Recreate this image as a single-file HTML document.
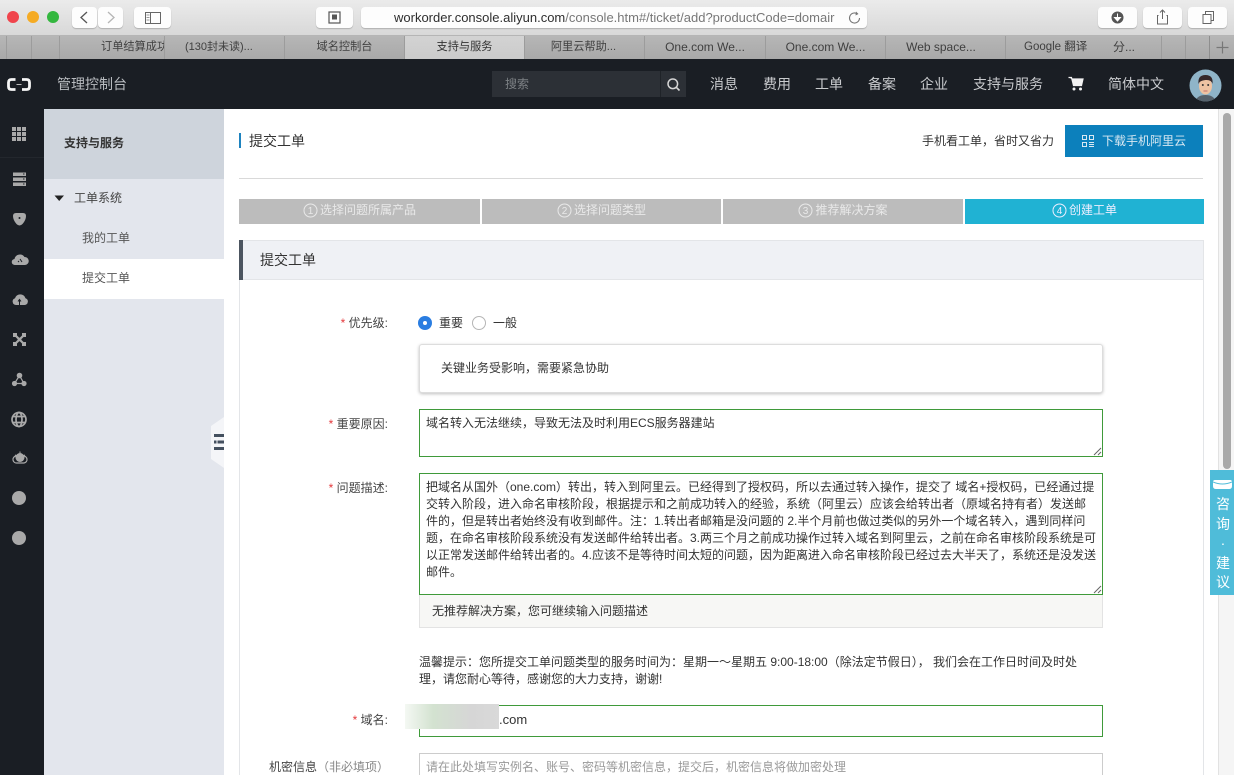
<!DOCTYPE html>
<html lang="zh"><head><meta charset="utf-8"><title>提交工单</title>
<style>
*{box-sizing:border-box}
html,body{margin:0;padding:0;width:1234px;height:775px;overflow:hidden}
body{background:#fff;font-family:"Liberation Sans","Noto Sans CJK SC",sans-serif;font-size:12px;color:#333}
#w{position:relative;width:1234px;height:775px;overflow:hidden}
.a{position:absolute;white-space:nowrap}
.btn{position:absolute;background:#fdfdfd;border-radius:4px;box-shadow:0 1px 1px rgba(0,0,0,.2);height:21px;top:7px}
.tab{position:absolute;top:36px;height:23px;line-height:23px;text-align:center;color:#3f3f3f;font-size:12px;border-left:1px solid #9c9c9c;white-space:nowrap;overflow:hidden}
.nav{position:absolute;top:75px;font-size:14px;line-height:18px;color:#c9cbce;white-space:nowrap}
.step{position:absolute;top:199px;height:25px;background:#bcbcbc;color:#e9e9e9;text-align:center;line-height:23px;font-size:12px;white-space:nowrap}
.step svg{vertical-align:-4px;margin-right:2px}
.lab{position:absolute;right:846px;font-size:12px;line-height:18px;color:#444;white-space:nowrap}
.lab i{color:#e4393c;font-style:normal}
.box{position:absolute;left:419px;width:684px;border:1.5px solid #3f9a3a;background:#fff}
.ln{position:absolute;left:426px;font-size:12px;line-height:17px;color:#333;white-space:nowrap}
</style></head><body><div id="w">

<!-- browser toolbar -->
<div class="a" style="left:0;top:0;width:1234px;height:36px;background:linear-gradient(#ebebeb,#d8d8d8);border-bottom:1px solid #b5b5b5"></div>
<div class="a" style="left:7px;top:11px;width:12px;height:12px;border-radius:50%;background:#f0444c"></div>
<div class="a" style="left:27px;top:11px;width:12px;height:12px;border-radius:50%;background:#f5ab24"></div>
<div class="a" style="left:47px;top:11px;width:12px;height:12px;border-radius:50%;background:#34b73f"></div>
<div class="btn" style="left:72px;width:25px"><svg width="25" height="21"><path d="M15 5L9 10.500L15 16" fill="none" stroke="#555" stroke-width="1.300"/></svg></div>
<div class="btn" style="left:98px;width:25px"><svg width="25" height="21"><path d="M10 5L16 10.500L10 16" fill="none" stroke="#b5b5b5" stroke-width="1.300"/></svg></div>
<div class="btn" style="left:134px;width:37px"><svg width="37" height="21"><rect x="11.500" y="5.500" width="15" height="11" fill="none" stroke="#666"/><path d="M16.500 5.500V16.500" stroke="#666"/><path d="M12.500 8h3M12.500 10.500h3M12.500 13h3" stroke="#999"/></svg></div>
<div class="btn" style="left:316px;width:37px"><svg width="37" height="21"><rect x="13" y="5" width="11" height="11" fill="none" stroke="#555" stroke-width="1.200"/><rect x="16" y="7.500" width="5" height="5" fill="#555"/></svg></div>
<div class="btn" style="left:361px;width:506px;font-size:13px;line-height:21px;color:#777;overflow:hidden"><span style="position:absolute;left:33px;top:0;white-space:nowrap"><span style="color:#2e2e2e">workorder.console.aliyun.com</span>/console.htm#/ticket/add?productCode=domair</span>
<svg style="position:absolute;left:486px;top:3px" width="16" height="16"><path d="M12.500 8a5 5 0 1 1-2-4" fill="none" stroke="#777" stroke-width="1.100"/><path d="M9 1.500L11.500 4L8.500 5.500z" fill="#777"/></svg></div>
<div class="btn" style="left:1098px;width:39px"><svg width="39" height="21"><circle cx="19.500" cy="10.500" r="6" fill="#555"/><path d="M19.500 6.500v5M16.500 10.500l3 3.500 3-3.500z" stroke="#fff" fill="#fff"/></svg></div>
<div class="btn" style="left:1143px;width:39px"><svg width="39" height="21"><path d="M15.500 8.500h-1v8.500h10v-8.500h-1M19.500 12V3.500M17 5.500l2.500-2.500 2.500 2.500" fill="none" stroke="#666"/></svg></div>
<div class="btn" style="left:1188px;width:39px"><svg width="39" height="21"><rect x="15" y="7.500" width="8" height="9" fill="none" stroke="#666"/><path d="M17.500 7.500V4.500h8v9h-2.500" fill="none" stroke="#666"/></svg></div>

<!-- tabs -->
<div class="a" style="left:0;top:36px;width:1234px;height:23px;background:linear-gradient(#b6b6b6,#a9a9a9)"></div>
<div class="tab" style="left:6px;width:25px"></div>
<div class="tab" style="left:31px;width:28px"></div>
<div class="tab" style="left:59px;width:105px;padding-left:41px;text-align:left;font-size:11.200px">订单结算成功</div>
<div class="tab" style="left:164px;width:120px;text-align:left;padding-left:20px;font-size:11px">(130封未读)...</div>
<div class="tab" style="left:284px;width:120px;font-size:11.200px">域名控制台</div>
<div class="tab" style="left:404px;width:120px;background:linear-gradient(#d3d3d3,#cbcbcb);color:#333;font-size:11.200px">支持与服务</div>
<div class="tab" style="left:524px;width:120px;padding-right:2px;font-size:11.200px">阿里云帮助...</div>
<div class="tab" style="left:644px;width:121px">One.com We...</div>
<div class="tab" style="left:765px;width:120px">One.com We...</div>
<div class="tab" style="left:885px;width:120px;padding-right:9px">Web space...</div>
<div class="tab" style="left:1005px;width:120px;text-align:left;padding-left:18px;font-size:11.500px">Google 翻译</div>
<div class="tab" style="left:1093px;width:69px;border:0;border-right:1px solid #9c9c9c;text-align:left;padding-left:20px">分...</div>
<div class="tab" style="left:1162px;width:24px;border-right:1px solid #9c9c9c;border-left:0"></div>
<div class="tab" style="left:1186px;width:24px;border-right:1px solid #8e8e8e;border-left:0"></div>
<svg class="a" style="left:1215px;top:40px" width="15" height="15"><path d="M7.500 1.500v12M1.500 7.500h12" stroke="#777" stroke-width="1.200"/></svg>

<!-- top nav -->
<div class="a" style="left:0;top:59px;width:1234px;height:50px;background:#1a1e24"></div>
<svg class="a" style="left:7px;top:78px" width="24" height="13"><path d="M8.500 1.500H4.500Q1.500 1.500 1.500 4.500V8.500Q1.500 11.500 4.500 11.500H8.500M15 1.500H19.500Q22.500 1.500 22.500 4.500V8.500Q22.500 11.500 19.500 11.500H15" fill="none" stroke="#f6f6f6" stroke-width="2.800"/><path d="M9.500 6.500h5" stroke="#bbb" stroke-width="1"/></svg>
<div class="a" style="left:57px;top:75px;font-size:14px;line-height:18px;color:#b9bcc0">管理控制台</div>
<div class="a" style="left:492px;top:71px;width:194px;height:26px;background:#2c3036"></div>
<div class="a" style="left:660px;top:71px;width:1px;height:26px;background:#1f2328"></div>
<div class="a" style="left:505px;top:76px;font-size:12px;line-height:16px;color:#7d8185">搜索</div>
<svg class="a" style="left:666px;top:77px" width="15" height="15"><circle cx="6.800" cy="6.800" r="4.800" fill="none" stroke="#d6d6d6" stroke-width="1.500"/><path d="M10.300 10.300L13.500 13.500" stroke="#d6d6d6" stroke-width="1.600"/></svg>
<div class="nav" style="left:710px">消息</div>
<div class="nav" style="left:763px">费用</div>
<div class="nav" style="left:815px">工单</div>
<div class="nav" style="left:868px">备案</div>
<div class="nav" style="left:920px">企业</div>
<div class="nav" style="left:973px">支持与服务</div>
<svg class="a" style="left:1067px;top:76px" width="18" height="16"><path d="M1.500 1.500H4.500L6.500 9.500H14.500L16 3H5" fill="#f2f2f2" stroke="#f2f2f2" stroke-width="1.200"/><circle cx="7" cy="13" r="1.500" fill="#f2f2f2"/><circle cx="13.500" cy="13" r="1.500" fill="#f2f2f2"/></svg>
<div class="nav" style="left:1108px">简体中文</div>
<svg class="a" style="left:1189px;top:69px" width="33" height="33"><defs><clipPath id="c"><circle cx="16.500" cy="16.500" r="16"/></clipPath></defs><g clip-path="url(#c)"><rect width="33" height="33" fill="#8fb4c8"/><path d="M6 33Q8 26 16.500 26T27 33z" fill="#56626c"/><ellipse cx="16.500" cy="17" rx="6.500" ry="8.500" fill="#eec3a2"/><path d="M9.500 15Q8.500 6 16.500 6T23.500 15Q22.500 10.500 16.500 11T9.500 15z" fill="#35282a"/><circle cx="13.800" cy="16" r="1" fill="#333"/><circle cx="19.200" cy="16" r="1" fill="#333"/><path d="M14.500 22h4" stroke="#b55" stroke-width=".8"/></g></svg>

<!-- left rail -->
<div class="a" style="left:0;top:109px;width:44px;height:666px;background:#1a1e24"></div>
<div class="a" style="left:0;top:157px;width:44px;height:1px;background:#23272d"></div>
<svg class="a" style="left:0;top:109px" width="44" height="400" viewBox="0 109 44 400" fill="#a9a9a9">
<path d="M12 127h4v4h-4zM17 127h4v4h-4zM22 127h4v4h-4zM12 132h4v4h-4zM17 132h4v4h-4zM22 132h4v4h-4zM12 137h4v4h-4zM17 137h4v4h-4zM22 137h4v4h-4z"/>
<path d="M13 172.500h13v3.500H13zM13 177.500h13v3.500H13zM13 182.500h13v3.500H13z"/>
<path d="M23 174h1.500M23 179h1.500M23 184h1.500" stroke="#1a1e24"/>
<path d="M13 216Q13 213 16 213H23Q26 213 26 216Q26 220 22.500 224Q19.500 227 16.500 224Q13 220 13 216z"/><circle cx="19.500" cy="218" r="1" fill="#1a1e24"/>
<path d="M15 265a3 3 0 0 1-.5-6 5.500 5.500 0 0 1 10-2 4 4 0 0 1 .5 8z"/><path d="M20 259l2 3M18 262l1-1" stroke="#1a1e24"/>
<path d="M16 305a3.500 3.500 0 0 1-1-6.800 5.500 5.500 0 0 1 10.500 0 3.500 3.500 0 0 1-1 6.800z"/><path d="M19.500 305v-5M18 301.500l1.500-2 1.500 2" stroke="#1a1e24" fill="none"/>
<path d="M14.500 334.500l10 10M24.500 334.500l-10 10" stroke="#a9a9a9" stroke-width="2.200"/><path d="M13 333h4v4h-4zM22 333h4v4h-4zM13 342h4v4h-4zM22 342h4v4h-4z"/><circle cx="19.500" cy="339.500" r="1.800"/>
<circle cx="19.500" cy="375.500" r="2.800"/><circle cx="14.500" cy="383.500" r="2.600"/><circle cx="24" cy="383.500" r="2.600"/><path d="M19.500 375.500L14.500 383.500H24z" fill="none" stroke="#a9a9a9" stroke-width="1.200"/>
<g fill="none" stroke="#a9a9a9" stroke-width="1.700"><circle cx="19" cy="419.500" r="7"/><ellipse cx="19" cy="419.500" rx="3" ry="7"/><path d="M12.500 416.500h13M12.500 422.500h13"/></g>
<path d="M17 463a3.500 3.500 0 0 1-1-7l7 0a3.500 3.500 0 0 1 1 7z" fill="none" stroke="#a9a9a9" stroke-width="1.200"/><circle cx="20" cy="457.500" r="4.500"/><path d="M20 451.500v2M15 455l2 1M25 455l-2 1" stroke="#a9a9a9"/>
</svg>
<div class="a" style="left:12px;top:491px;width:14px;height:14px;border-radius:50%;background:#a9a9a9"></div>
<div class="a" style="left:12px;top:531px;width:14px;height:14px;border-radius:50%;background:#a9a9a9"></div>

<!-- sidebar -->
<div class="a" style="left:44px;top:109px;width:180px;height:666px;background:#e3e6ed"></div>
<div class="a" style="left:44px;top:109px;width:180px;height:70px;background:#ced4dc"></div>
<div class="a" style="left:64px;top:135px;font-size:12px;line-height:17px;font-weight:700;color:#333">支持与服务</div>
<svg class="a" style="left:54px;top:195px" width="11" height="7"><path d="M0.500 0.500H10L5.200 6z" fill="#222"/></svg>
<div class="a" style="left:74px;top:190px;line-height:17px;color:#444">工单系统</div>
<div class="a" style="left:82px;top:230px;line-height:17px;color:#555">我的工单</div>
<div class="a" style="left:44px;top:259px;width:180px;height:40px;background:#fff"></div>
<div class="a" style="left:82px;top:270px;line-height:17px;color:#555">提交工单</div>
<svg class="a" style="left:210px;top:417px" width="14" height="51"><path d="M14 0L1 9V42L14 51z" fill="#f4f5f8"/><path d="M4 17h10v3H4zM4 23.500h2.500v3H4zM7.500 23.500H14v3H7.500zM4 30h10v3H4z" fill="#44505f"/></svg>

<!-- page head -->
<div class="a" style="left:239px;top:133px;width:2px;height:15px;background:#1e83bf"></div>
<div class="a" style="left:249px;top:131px;font-size:14px;line-height:20px;color:#333">提交工单</div>
<div class="a" style="left:922px;top:133px;line-height:17px;color:#333">手机看工单，省时又省力</div>
<div class="a" style="left:1065px;top:125px;width:138px;height:32px;background:#0c80bc;color:#d8e8f2;line-height:32px;padding-left:37px">下载手机阿里云</div>
<svg class="a" style="left:1081px;top:134px" width="14" height="14" fill="none" stroke="#d8e8f2"><rect x="1.500" y="1.500" width="4" height="4"/><rect x="8.500" y="1.500" width="4" height="4"/><rect x="1.500" y="8.500" width="4" height="4"/><path d="M8 8.500h5M8 10.500h5M8 12.500h5"/></svg>
<div class="a" style="left:239px;top:178px;width:964px;height:1px;background:#d9d9d9"></div>

<!-- steps -->
<div class="step" style="left:239px;width:241px"><svg width="15" height="15"><circle cx="7.500" cy="7.500" r="6.500" fill="none" stroke="#e9e9e9"/><text x="7.500" y="11" font-size="10" text-anchor="middle" fill="#e9e9e9">1</text></svg>选择问题所属产品</div>
<div class="step" style="left:482px;width:239px"><svg width="15" height="15"><circle cx="7.500" cy="7.500" r="6.500" fill="none" stroke="#e9e9e9"/><text x="7.500" y="11" font-size="10" text-anchor="middle" fill="#e9e9e9">2</text></svg>选择问题类型</div>
<div class="step" style="left:723px;width:240px"><svg width="15" height="15"><circle cx="7.500" cy="7.500" r="6.500" fill="none" stroke="#e9e9e9"/><text x="7.500" y="11" font-size="10" text-anchor="middle" fill="#e9e9e9">3</text></svg>推荐解决方案</div>
<div class="step" style="left:965px;width:239px;background:#20b2d3;color:#eef"><svg width="15" height="15"><circle cx="7.500" cy="7.500" r="6.500" fill="none" stroke="#eef"/><text x="7.500" y="11" font-size="10" text-anchor="middle" fill="#eef">4</text></svg>创建工单</div>

<!-- panel -->
<div class="a" style="left:239px;top:240px;width:965px;height:535px;border:1px solid #e3e5e8;border-bottom:0"></div>
<div class="a" style="left:239px;top:240px;width:965px;height:40px;background:#eff1f5;border:1px solid #e3e5e8"></div>
<div class="a" style="left:239px;top:240px;width:4px;height:40px;background:#4c5560"></div>
<div class="a" style="left:260px;top:250px;font-size:14px;line-height:20px;color:#333">提交工单</div>

<div class="lab" style="top:314px"><i>* </i>优先级:</div>
<div class="a" style="left:418px;top:316px;width:14px;height:14px;border-radius:50%;background:#2a7de1"></div>
<div class="a" style="left:423px;top:321px;width:4px;height:4px;border-radius:50%;background:#fff"></div>
<div class="a" style="left:439px;top:315px;line-height:17px;color:#333">重要</div>
<div class="a" style="left:472px;top:316px;width:14px;height:14px;border-radius:50%;background:#fff;border:1px solid #b5b5b5"></div>
<div class="a" style="left:493px;top:315px;line-height:17px;color:#333">一般</div>
<div class="a" style="left:419px;top:344px;width:684px;height:49px;background:#fff;border:1px solid #ddd;border-radius:3px;box-shadow:0 1px 3px rgba(0,0,0,.25)"></div>
<div class="a" style="left:441px;top:360px;line-height:17px;color:#333">关键业务受影响，需要紧急协助</div>

<div class="lab" style="top:415px"><i>* </i>重要原因:</div>
<div class="box" style="top:409px;height:48px"></div>
<div class="ln" style="top:415px">域名转入无法继续，导致无法及时利用ECS服务器建站</div>
<svg class="a" style="left:1093px;top:447px" width="9" height="9"><path d="M1 8L8 1M5 8L8 5" stroke="#666"/></svg>

<div class="lab" style="top:479px"><i>* </i>问题描述:</div>
<div class="box" style="top:473px;height:122px"></div>
<div class="ln" style="top:479px">把域名从国外（one.com）转出，转入到阿里云。已经得到了授权码，所以去通过转入操作，提交了 域名+授权码，已经通过提</div>
<div class="ln" style="top:496px">交转入阶段，进入命名审核阶段，根据提示和之前成功转入的经验，系统（阿里云）应该会给转出者（原域名持有者）发送邮</div>
<div class="ln" style="top:513px">件的，但是转出者始终没有收到邮件。注：1.转出者邮箱是没问题的 2.半个月前也做过类似的另外一个域名转入，遇到同样问</div>
<div class="ln" style="top:530px">题，在命名审核阶段系统没有发送邮件给转出者。3.两三个月之前成功操作过转入域名到阿里云，之前在命名审核阶段系统是可</div>
<div class="ln" style="top:547px">以正常发送邮件给转出者的。4.应该不是等待时间太短的问题，因为距离进入命名审核阶段已经过去大半天了，系统还是没发送</div>
<div class="ln" style="top:564px">邮件。</div>
<svg class="a" style="left:1093px;top:585px" width="9" height="9"><path d="M1 8L8 1M5 8L8 5" stroke="#666"/></svg>
<div class="a" style="left:419px;top:595px;width:684px;height:33px;background:#f7f7f5;border:1px solid #e3e3e3;border-top:0"></div>
<div class="a" style="left:432px;top:603px;line-height:17px;color:#333">无推荐解决方案，您可继续输入问题描述</div>

<div class="a" style="left:419px;top:654px;line-height:17px;color:#333">温馨提示：您所提交工单问题类型的服务时间为：星期一～星期五 9:00-18:00（除法定节假日）， 我们会在工作日时间及时处</div>
<div class="a" style="left:419px;top:671px;line-height:17px;color:#333">理，请您耐心等待，感谢您的大力支持，谢谢!</div>

<div class="lab" style="top:711px"><i>* </i>域名:</div>
<div class="box" style="top:705px;height:32px"></div>
<div class="a" style="left:405px;top:704px;width:94px;height:25px;background:linear-gradient(90deg,#f4f8f3,#d3e2d0 30%,#d6d6d6 70%,#d9d9d9)"></div>
<div class="a" style="left:499px;top:711px;font-size:13px;line-height:17px;color:#333">.com</div>

<div class="a" style="left:269px;top:759px;line-height:17px;color:#444">机密信息<span style="color:#888">（非必填项）</span></div>
<div class="a" style="left:419px;top:753px;width:684px;height:22px;border:1px solid #ccc;border-bottom:0;background:#fff"></div>
<div class="a" style="left:426px;top:759px;line-height:16px;color:#999">请在此处填写实例名、账号、密码等机密信息，提交后，机密信息将做加密处理</div>

<!-- scrollbar -->
<div class="a" style="left:1218px;top:109px;width:16px;height:666px;background:#f5f5f5;border-left:1px solid #e2e2e2"></div>
<div class="a" style="left:1223px;top:113px;width:8px;height:356px;border-radius:4px;background:#a9a9a9"></div>

<!-- float -->
<div class="a" style="left:1210px;top:470px;width:24px;height:125px;background:#4fbcd9"></div>
<svg class="a" style="left:1213px;top:479px" width="19" height="11"><path d="M2 1H17Q19 1 19 3V7Q19 10 16 10H3Q0 10 0 7V3Q0 1 2 1z" fill="#fff"/><path d="M0 3Q9.500 7 19 3" fill="none" stroke="#4fbcd9"/></svg>
<div class="a" style="left:1215px;top:495px;font-size:14px;line-height:19.500px;color:#fff;white-space:normal;width:16px;text-align:center">咨<br>询<br>·<br>建<br>议</div>
</div></body></html>
